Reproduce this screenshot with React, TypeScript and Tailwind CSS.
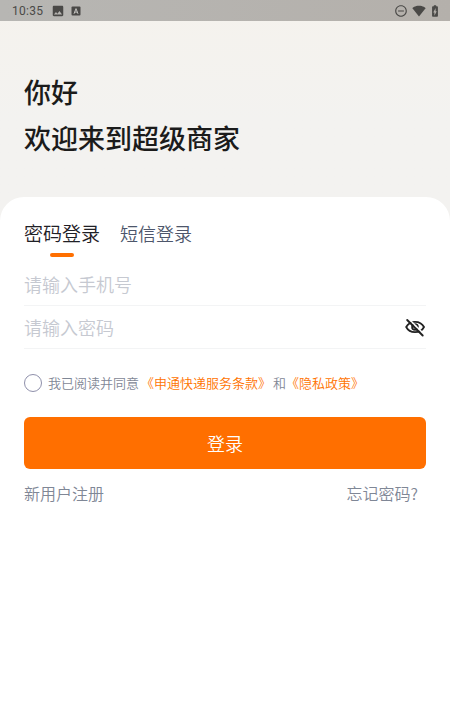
import { useState } from 'react';
import { MdBatteryChargingFull, MdImage, MdRemoveCircleOutline, MdSignalWifi4Bar } from 'react-icons/md';
import clsx from 'clsx';

type LoginMode = 'password' | 'sms';

const tabs: { id: LoginMode; label: string }[] = [
  { id: 'password', label: '密码登录' },
  { id: 'sms', label: '短信登录' },
];

function StatusBar() {
  return (
    <div className="flex h-[21px] items-center justify-between bg-linear-to-r from-[#b7b6b3] to-[#b4b0ab] pl-3 pr-2 text-[#4a4947]">
      <div className="flex items-center">
        <span className="font-[Roboto,sans-serif] text-xs font-normal tracking-wide">10:35</span>
        <MdImage className="ml-2 size-3.5" />
        <svg viewBox="0 0 10 10" className="ml-1.5 size-2.5" aria-hidden="true">
          <rect x="0.5" y="0.5" width="9" height="9" rx="1" fill="currentColor" />
          <path d="M3 7.8 5 2.6 7 7.8M3.7 6.1h2.6" fill="none" stroke="#d0cfcc" strokeWidth="0.9" />
        </svg>
      </div>
      <div className="flex items-center">
        <MdRemoveCircleOutline className="size-3.5" />
        <MdSignalWifi4Bar className="ml-1 size-3.5" />
        <MdBatteryChargingFull className="ml-0.5 size-3.5" />
      </div>
    </div>
  );
}

function EyeOffIcon() {
  return (
    <svg viewBox="0 0 22 22" className="size-[22px]" fill="none" strokeLinecap="round" aria-hidden="true">
      <g stroke="#222222" strokeWidth="1.8">
        <path d="M2.2 11C4 7.5 7.2 5.8 11 5.8S18.2 7.5 20 11C18.2 14.5 14.9 16.2 11 16.2S4 14.5 2.2 11Z" />
        <circle cx="11" cy="11" r="2.9" />
      </g>
      <path d="M4.6 2.8 20.2 18.4" stroke="#ffffff" strokeWidth="1.6" />
      <path d="M3.2 4 18.7 19.5" stroke="#222222" strokeWidth="1.9" />
    </svg>
  );
}

export default function App() {
  const [mode, setMode] = useState<LoginMode>('password');
  const [showPassword, setShowPassword] = useState(false);

  return (
    <div className="flex min-h-screen flex-col bg-linear-to-b from-[#f5f2ed] to-[#f3f2f0] to-[120px] font-['Noto_Sans_CJK_SC',sans-serif] font-[350]">
      <StatusBar />

      <header className="px-6 pt-12 pb-9 text-[27px] leading-[46px] font-medium text-[#1b1b1b]">
        <p>你好</p>
        <h1>欢迎来到超级商家</h1>
      </header>

      <main className="flex-1 rounded-t-3xl bg-white px-6 pt-5">
        <div role="tablist" className="flex gap-5">
          {tabs.map((tab) => (
            <button
              key={tab.id}
              type="button"
              role="tab"
              aria-selected={mode === tab.id}
              onClick={() => setMode(tab.id)}
              className={clsx(
                'flex flex-col items-center',
                mode === tab.id ? 'text-[19px] leading-8 text-[#1f2026]' : 'text-lg leading-8 text-[#4d566b]'
              )}
            >
              {tab.label}
              {mode === tab.id && <span className="mt-1 h-1 w-6 rounded-full bg-[#ff6f00]" />}
            </button>
          ))}
        </div>

        <form onSubmit={(e) => e.preventDefault()}>
          <div className="mt-1.5 flex h-[43px] items-center border-b border-[#f3f4f5]">
            <input
              type="tel"
              aria-label="手机号"
              placeholder="请输入手机号"
              className="w-full text-lg text-[#1f2026] outline-none placeholder:text-[#c6c9d1]"
            />
          </div>
          <div className="flex h-[43px] items-center border-b border-[#f3f4f5]">
            <input
              type={showPassword ? 'text' : 'password'}
              aria-label="密码"
              placeholder="请输入密码"
              className="min-w-0 flex-1 text-lg text-[#1f2026] outline-none placeholder:text-[#c6c9d1]"
            />
            <button type="button" aria-label="显示密码" onClick={() => setShowPassword(!showPassword)}>
              <EyeOffIcon />
            </button>
          </div>

          <div className="mt-6 flex items-center text-[13px] leading-5 text-[#7f8796]">
            <input
              id="agree"
              type="checkbox"
              className="size-[18px] appearance-none rounded-full border border-[#8f90ab] checked:bg-[#ff6f00]"
            />
            <label htmlFor="agree" className="ml-1.5">
              我已阅读并同意
            </label>
            <a href="#terms" className="ml-0.5 text-[#ff7300]">
              《申通快递服务条款》
            </a>
            <span className="ml-0.5">和</span>
            <a href="#privacy" className="text-[#ff7300]">
              《隐私政策》
            </a>
          </div>

          <button type="submit" className="mt-6 h-[52px] w-full rounded-md bg-[#ff6f00] text-lg text-white">
            登录
          </button>
        </form>

        <div className="mt-3 flex justify-between pr-2 text-base text-[#7f8796]">
          <a href="#register">新用户注册</a>
          <a href="#forgot">忘记密码?</a>
        </div>
      </main>
    </div>
  );
}
